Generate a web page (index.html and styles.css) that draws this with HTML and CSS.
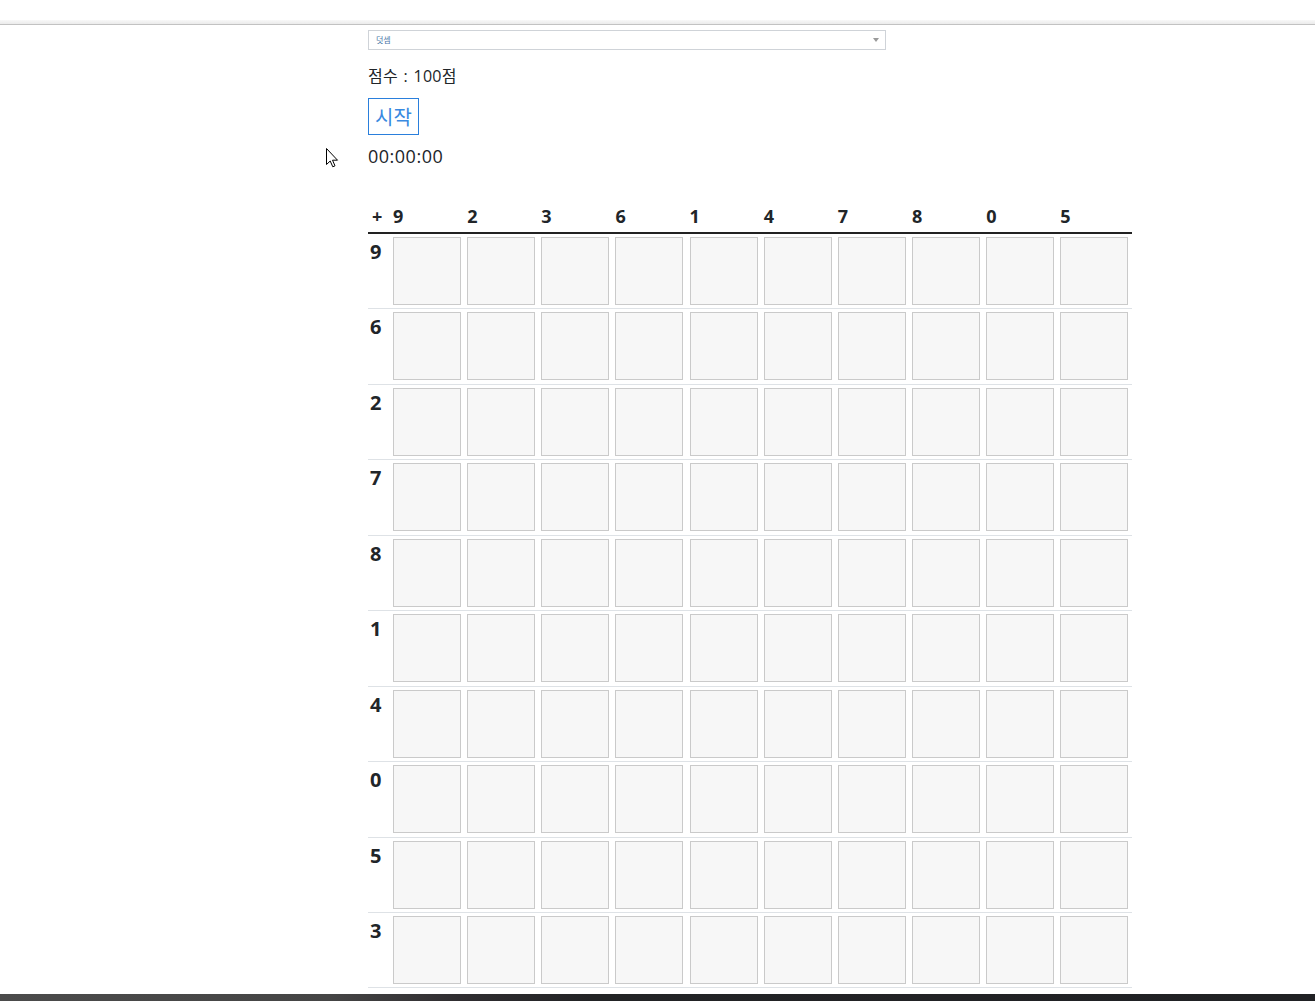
FILE: index.html
```html
<!DOCTYPE html>
<html lang="ko">
<head>
<meta charset="utf-8">
<title>덧셈 게임</title>
<link rel="stylesheet" href="styles.css">
</head>
<body>
<div class="topbar"><div class="topbar-strip"></div></div>
<main class="page">
  <div class="select">
    <span class="select-text">덧셈</span>
    <svg class="select-arrow" width="6" height="4" viewBox="0 0 6 4"><path d="M0 0 L6 0 L3 4 Z" fill="#9a9a9a"/></svg>
  </div>
  <p class="score">점수 : 100점</p>
  <button class="start-btn" type="button">시작</button>
  <p class="timer">00:00:00</p>
  <table class="grid">
    <colgroup><col class="col-head"><col><col><col><col><col><col><col><col><col><col></colgroup>
    <thead>
      <tr><th class="op">+</th><th>9</th><th>2</th><th>3</th><th>6</th><th>1</th><th>4</th><th>7</th><th>8</th><th>0</th><th>5</th></tr>
    </thead>
    <tbody id="rows"></tbody>
  </table>
</main>
<svg class="cursor" width="13" height="20" viewBox="0 0 13 20"><path d="M0.5 0.5 L0.5 16.5 L4.2 13 L6.8 18.8 L9 17.8 L6.5 12.2 L11.5 12.2 Z" fill="#fff" stroke="#000" stroke-width="1" stroke-linejoin="miter"/></svg>
<div class="taskbar"></div>
<script>
  var rows = [9, 6, 2, 7, 8, 1, 4, 0, 5, 3];
  var tb = document.getElementById('rows');
  rows.forEach(function (n) {
    var tr = document.createElement('tr');
    var th = document.createElement('th');
    th.className = 'rowhead';
    th.textContent = n;
    tr.appendChild(th);
    for (var i = 0; i < 10; i++) {
      var td = document.createElement('td');
      var box = document.createElement('div');
      box.className = 'box';
      td.appendChild(box);
      tr.appendChild(td);
    }
    tb.appendChild(tr);
  });
</script>
</body>
</html>
```
FILE: styles.css
```css
html, body {
  margin: 0;
  padding: 0;
  background: #fff;
}
body {
  font-family: "Open Sans", "Noto Sans CJK KR", sans-serif;
  color: #212529;
}
.topbar {
  padding-top: 20px;
  background: #fff;
}
.topbar-strip {
  height: 4px;
  background: linear-gradient(#f8f8f8, #ebebeb);
  border-bottom: 1px solid #c2c2c2;
}
.page {
  margin-left: 368px;
  padding-top: 5px;
  width: 764px;
}
.select {
  width: 503px;
  height: 18px;
  border: 1px solid #cfd3d8;
  display: flex;
  align-items: center;
  justify-content: space-between;
  padding: 0 6px 0 7px;
}
.select-text {
  font-family: "Noto Sans CJK KR", sans-serif;
  font-size: 8px;
  color: #4a78a8;
  line-height: 1;
}
.select-arrow {
  display: block;
}
.score {
  margin: 14px 0 0;
  font-family: "Open Sans", "Noto Sans CJK KR", sans-serif;
  font-size: 16px;
  line-height: 24px;
  word-spacing: 1px;
  letter-spacing: 0.3px;
}
.start-btn {
  display: block;
  margin-top: 10px;
  height: 37px;
  padding: 0 6px;
  border: 1px solid #2a7fdc;
  background: #fff;
  color: #3a8ae0;
  font-family: "Noto Sans CJK KR", sans-serif;
  font-size: 20px;
  line-height: 30px;
  border-radius: 0;
}
.timer {
  margin: 8px 0 0;
  font-size: 18px;
  line-height: 27px;
  letter-spacing: 0.5px;
}
.grid {
  margin-top: 30px;
  width: 764px;
  table-layout: fixed;
  border-collapse: collapse;
}
.col-head {
  width: 22.5px;
}
.grid thead th {
  font-size: 18px;
  font-weight: 700;
  line-height: 27px;
  text-align: left;
  padding: 3px 0 2px 2.5px;
  border-bottom: 2px solid #222;
}
.grid thead th.op {
  padding-left: 4px;
}
.grid tbody th.rowhead {
  font-size: 20px;
  font-weight: 700;
  line-height: 28px;
  text-align: left;
  vertical-align: top;
  padding: 4px 0 0 2px;
}
.grid tbody tr {
  border-bottom: 1px solid #dee2e6;
}
.grid td {
  padding: 3px 0 3.45px 2.5px;
  vertical-align: top;
}
.box {
  width: 66px;
  height: 66px;
  border: 1px solid #cacaca;
  background: #f7f7f7;
}
.cursor {
  position: absolute;
  left: 326px;
  top: 148px;
}
.taskbar {
  position: fixed;
  left: 0;
  right: 0;
  bottom: 0;
  height: 7px;
  background: linear-gradient(90deg, #4b4b4b 0%, #454545 25%, #2f2d30 35%, #222325 45%, #202124 100%);
}
```
